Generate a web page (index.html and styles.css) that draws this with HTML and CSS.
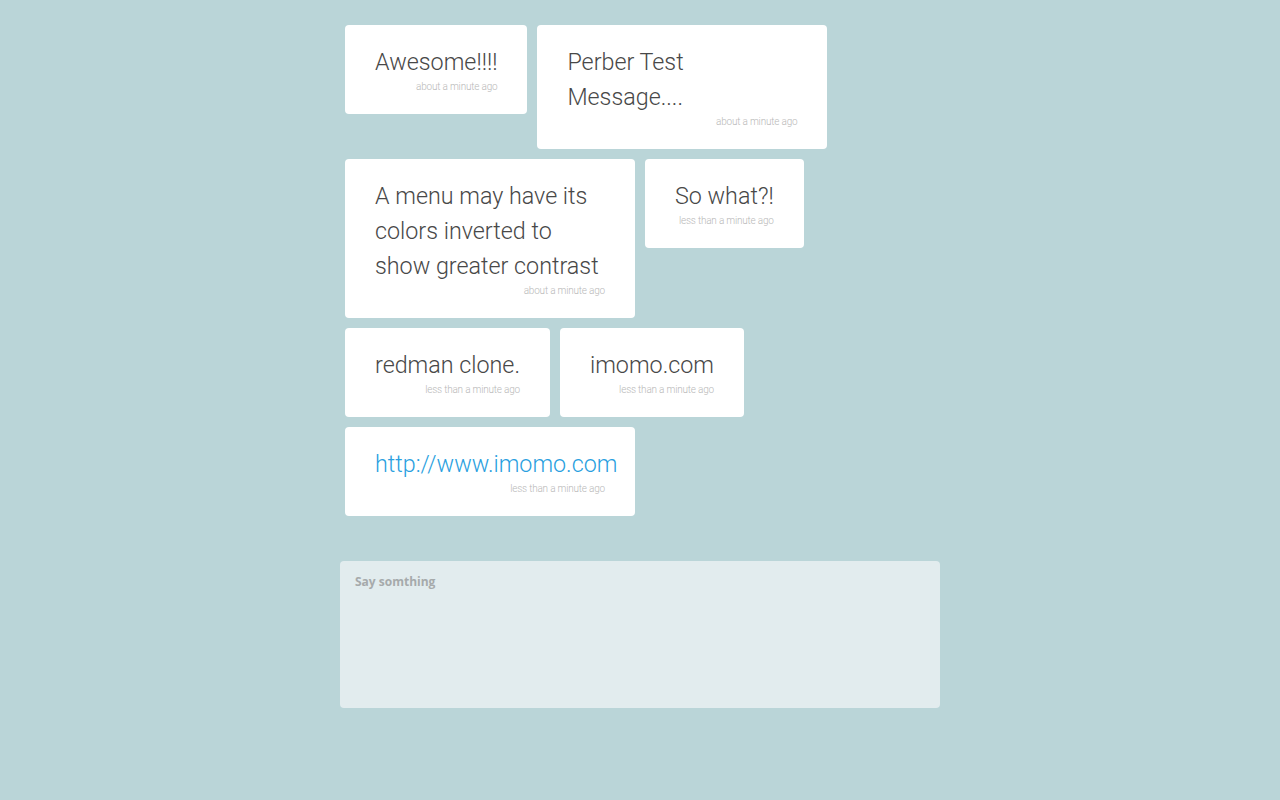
FILE: index.html
```html
<!DOCTYPE html>
<html>
<head>
<meta charset="utf-8">
<title>Messages</title>
<link rel="stylesheet" href="styles.css">
</head>
<body>
<div class="page">
  <div class="messages">
    <div class="card"><div class="text">Awesome!!!!</div><div class="time">about a minute ago</div></div>
    <div class="card"><div class="text">Perber Test Message....</div><div class="time">about a minute ago</div></div>
    <div class="card"><div class="text">A menu may have its colors inverted to show greater contrast</div><div class="time">about a minute ago</div></div>
    <div class="card"><div class="text">So what?!</div><div class="time">less than a minute ago</div></div>
    <div class="card"><div class="text">redman clone.</div><div class="time">less than a minute ago</div></div>
    <div class="card"><div class="text">imomo.com</div><div class="time">less than a minute ago</div></div>
    <div class="card"><div class="text"><a class="link" href="#">http://www.imomo.com</a></div><div class="time">less than a minute ago</div></div>
  </div>
  <textarea class="say" placeholder="Say somthing"></textarea>
</div>
</body>
</html>
```
FILE: styles.css
```css
html, body {
  margin: 0;
  padding: 0;
  background: #bad5d8;
  height: 100%;
}
body {
  font-family: Roboto, "Liberation Sans", sans-serif;
}
.page {
  width: 600px;
  margin: 0 auto;
  padding-top: 20px;
}
.messages {
  display: flex;
  flex-wrap: wrap;
  align-items: flex-start;
}
.card {
  background: #fff;
  border-radius: 4px;
  margin: 5px;
  padding: 20px 30px;
  box-sizing: content-box;
  max-width: 230px;
}
.text {
  font-family: "Roboto Light", Roboto, sans-serif;
  font-weight: 300;
  font-size: 23.3px;
  line-height: 35px;
  color: #484848;
}
.link {
  color: #2a9fe0;
  text-decoration: none;
  white-space: nowrap;
}
.time {
  font-family: "Roboto Light", Roboto, sans-serif;
  font-weight: 300;
  font-size: 10px;
  line-height: 14px;
  color: #b8b8b8;
  text-align: right;
  letter-spacing: -0.2px;
}
.say {
  display: block;
  width: 600px;
  height: 147px;
  margin: 40px 0 0 0;
  box-sizing: border-box;
  border: none;
  border-radius: 4px;
  background: #e2ecee;
  padding: 12px 15px;
  font-family: "Open Sans", sans-serif;
  font-weight: 700;
  font-size: 12px;
  color: #555;
  resize: none;
  outline: none;
}
.say::placeholder {
  color: #a6aaab;
}
```
